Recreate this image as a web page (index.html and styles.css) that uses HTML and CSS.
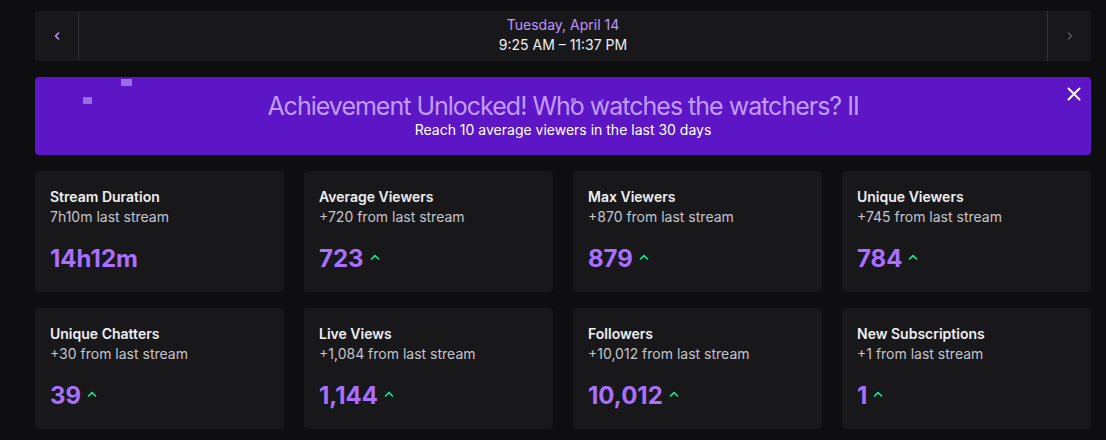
FILE: index.html
```html
<!DOCTYPE html>
<html lang="en">
<head>
  <meta charset="UTF-8">
  <title>Stream Summary</title>
  <link rel="stylesheet" href="styles.css">
</head>
<body>

  <div class="page">

    <div class="day-nav">
      <button class="nav-btn prev">
        <svg width="10" height="10" viewBox="0 0 10 10"><path d="M6.5 2 L3.5 5 L6.5 8" fill="none" stroke="#bf94ff" stroke-width="1.6" stroke-linecap="round" stroke-linejoin="round"/></svg>
      </button>
      <div class="day-info">
        <div class="day-date">Tuesday, April 14</div>
        <div class="day-time">9:25 AM – 11:37 PM</div>
      </div>
      <button class="nav-btn next">
        <svg width="10" height="10" viewBox="0 0 10 10"><path d="M3.5 2 L6.5 5 L3.5 8" fill="none" stroke="#5c5c66" stroke-width="1.4" stroke-linecap="round" stroke-linejoin="round"/></svg>
      </button>
    </div>

    <div class="achievement">
      <span class="confetti c1"></span>
      <span class="confetti c2"></span>
      <span class="confetti c3"></span>
      <span class="confetti c4"></span>
      <div class="ach-title">Achievement Unlocked! Who watches the watchers? II</div>
      <div class="ach-sub">Reach 10 average viewers in the last 30 days</div>
      <button class="ach-close">
        <svg width="14" height="14" viewBox="0 0 14 14"><path d="M1.5 1.5 L12.5 12.5 M12.5 1.5 L1.5 12.5" stroke="#fff" stroke-width="2" stroke-linecap="round"/></svg>
      </button>
    </div>

    <div class="stats" id="stats"></div>

  </div>

  <script>
    const stats = [
      { title: "Stream Duration", sub: "7h10m last stream", value: "14h12m", up: false },
      { title: "Average Viewers", sub: "+720 from last stream", value: "723", up: true },
      { title: "Max Viewers", sub: "+870 from last stream", value: "879", up: true },
      { title: "Unique Viewers", sub: "+745 from last stream", value: "784", up: true },
      { title: "Unique Chatters", sub: "+30 from last stream", value: "39", up: true },
      { title: "Live Views", sub: "+1,084 from last stream", value: "1,144", up: true },
      { title: "Followers", sub: "+10,012 from last stream", value: "10,012", up: true },
      { title: "New Subscriptions", sub: "+1 from last stream", value: "1", up: true }
    ];

    const arrow = `<svg class="arrow" width="10" height="8" viewBox="0 0 10 8"><path d="M1.5 6 L5 2.5 L8.5 6" fill="none" stroke="#00f593" stroke-width="1.6" stroke-linecap="round" stroke-linejoin="round"/></svg>`;

    let cards = "";
    for (let s of stats) {
      cards += `
        <div class="card">
          <div class="card-title">${s.title}</div>
          <div class="card-sub">${s.sub}</div>
          <div class="card-value">${s.value}${s.up ? arrow : ""}</div>
        </div>`;
    }
    document.getElementById("stats").innerHTML = cards;
  </script>

</body>
</html>
```

FILE: styles.css
```css
body {
  margin: 0;
  background-color: #0e0e10;
  font-family: Inter, "Noto Sans", sans-serif;
  color: #efeff1;
}
.page {
  width: 1056px;
  padding: 11px 0 0 35px;
}
.day-nav {
  display: flex;
  height: 50px;
  background: #18181b;
  border-radius: 2px;
}
.nav-btn {
  width: 44px;
  background: none;
  border: none;
  padding: 0;
  display: flex;
  align-items: center;
  justify-content: center;
  cursor: pointer;
}
.prev {
  border-right: 1px solid #323236;
}
.next {
  border-left: 1px solid #323236;
}
.day-info {
  flex: 1;
  display: flex;
  flex-direction: column;
  align-items: center;
  justify-content: center;
  font-size: 14px;
  line-height: 20px;
  padding-bottom: 3px;
}
.day-date {
  color: #bf94ff;
}
.day-time {
  color: #efeff1;
}
.achievement {
  position: relative;
  margin-top: 16px;
  height: 78px;
  background: #5c16c5;
  border-radius: 4px;
  display: flex;
  flex-direction: column;
  align-items: center;
  justify-content: center;
  overflow: hidden;
}
.ach-title {
  font-size: 25px;
  line-height: 30px;
  margin-top: -2px;
  color: #c29bff;
  letter-spacing: -1px;
}
.ach-sub {
  font-size: 14px;
  line-height: 18px;
  color: #ffffff;
}
.ach-close {
  position: absolute;
  top: 10px;
  right: 10px;
  width: 14px;
  height: 14px;
  padding: 0;
  background: none;
  border: none;
  cursor: pointer;
}
.confetti {
  position: absolute;
  background: #a47ee8;
  opacity: 0.85;
}
.c1 { left: 86px; top: 2px; width: 11px; height: 7px; }
.c2 { left: 48px; top: 20px; width: 9px; height: 7px; }
.c3 { left: 536px; top: 21px; width: 5px; height: 5px; }
.c4 { left: 566px; top: 22px; width: 3px; height: 3px; opacity: 0.5; }
.stats {
  margin-top: 16px;
  display: grid;
  grid-template-columns: repeat(4, 1fr);
  column-gap: 20px;
  row-gap: 16px;
}
.card {
  height: 121px;
  box-sizing: border-box;
  background: #18181b;
  border-radius: 4px;
  padding: 17px 15px;
}
.card-title {
  font-size: 14px;
  font-weight: 600;
  line-height: 18px;
  color: #efeff1;
}
.card-sub {
  font-size: 14px;
  line-height: 20px;
  margin-top: 1px;
  color: #c4c4cb;
}
.card-value {
  margin-top: 17px;
  font-size: 24px;
  font-weight: 700;
  line-height: 30px;
  color: #a970ff;
  display: flex;
  align-items: center;
}
.arrow {
  margin-left: 6px;
  margin-top: -4px;
}
```
